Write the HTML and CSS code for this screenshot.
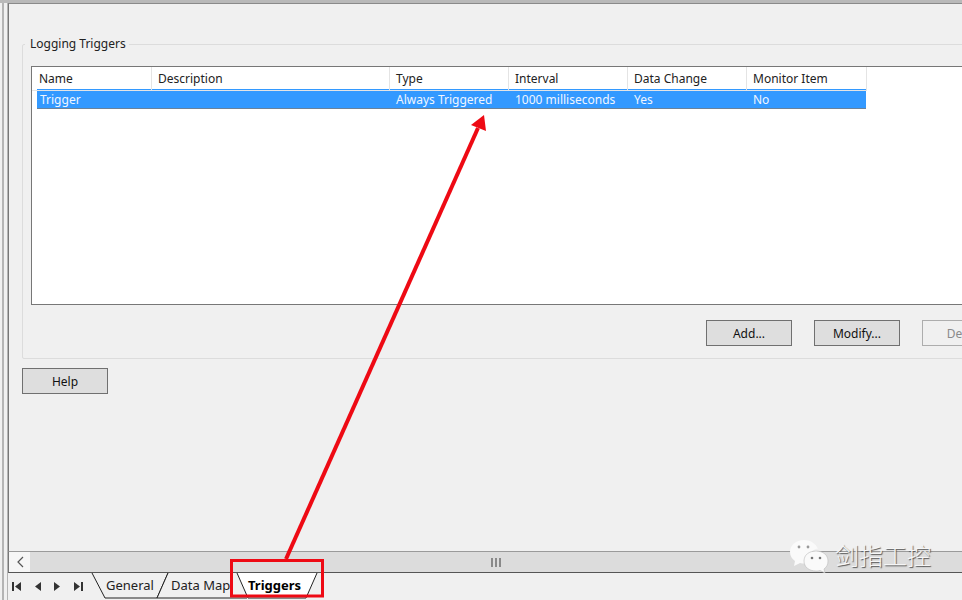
FILE: index.html
```html
<!DOCTYPE html>
<html>
<head>
    <meta charset="UTF-8">
    <title>Logging Triggers</title>
    <link rel="stylesheet" href="styles.css">
</head>
<body>
    <div class="frame">
        <div class="inner">
            <div class="content">
                <fieldset class="group">
                    <legend>Logging Triggers</legend>
                    <div class="list">
                        <div class="list-head">
                            <div class="col first">Name</div>
                            <div class="col">Description</div>
                            <div class="col">Type</div>
                            <div class="col">Interval</div>
                            <div class="col">Data Change</div>
                            <div class="col">Monitor Item</div>
                        </div>
                        <div class="list-row">
                            <div class="cell first">Trigger</div>
                            <div class="cell"></div>
                            <div class="cell">Always Triggered</div>
                            <div class="cell">1000 milliseconds</div>
                            <div class="cell">Yes</div>
                            <div class="cell">No</div>
                        </div>
                    </div>
                    <div class="actions">
                        <button class="btn">Add...</button>
                        <button class="btn">Modify...</button>
                        <button class="btn off">Delete</button>
                    </div>
                </fieldset>
                <button class="btn help">Help</button>
            </div>

            <div class="hscroll">
                <div class="arrow-btn">
                    <svg width="8" height="12" viewBox="0 0 8 12"><path d="M7 1L2 6l5 5" fill="none" stroke="#555" stroke-width="1.2"/></svg>
                </div>
                <div class="thumb">
                    <svg width="11" height="9" viewBox="0 0 11 9"><path d="M1 0v9M5 0v9M9 0v9" stroke="#666" stroke-width="1.4"/></svg>
                </div>
            </div>

            <div class="tabbar">
                <div class="nav-icons">
                    <svg width="11" height="11" viewBox="0 0 11 11"><path d="M1 1h2v9H1zM10 1v9L4 5.500z" fill="#333"/></svg>
                    <svg width="8" height="11" viewBox="0 0 8 11"><path d="M7 1v9L1 5.500z" fill="#333"/></svg>
                    <svg width="8" height="11" viewBox="0 0 8 11"><path d="M1 1v9l6-4.500z" fill="#333"/></svg>
                    <svg width="11" height="11" viewBox="0 0 11 11"><path d="M1 1v9l6-4.500zM8 1h2v9H8z" fill="#333"/></svg>
                </div>
                <div class="tabs">
                    <div class="tab general">
                        <svg width="76" height="27" viewBox="0 0 76 27"><path d="M0 0L13 25H65L76 0" fill="#f0f0f0" stroke="#222"/></svg>
                        <span>General</span>
                    </div>
                    <div class="tab datamap">
                        <svg width="90" height="27" viewBox="0 0 90 27"><path d="M11 0L0 25H90" fill="#f0f0f0" stroke="#222"/></svg>
                        <span>Data Map</span>
                    </div>
                    <div class="tab active">
                        <svg width="80" height="27" viewBox="0 0 80 27"><path d="M0 0L11 25H69L80 0" fill="#fff" stroke="#222"/></svg>
                        <span>Triggers</span>
                    </div>
                </div>
            </div>
        </div>
    </div>

    <!-- красные пометки поверх скриншота -->
    <svg class="marks" width="962" height="600" viewBox="0 0 962 600">
        <rect x="231.500" y="560.500" width="91" height="35.500" fill="none" stroke="#ee0a14" stroke-width="3"/>
        <path d="M286 559L478 128" fill="none" stroke="#ee0a14" stroke-width="4"/>
        <path d="M484 115L486 131L471 125z" fill="#ee0a14"/>
    </svg>

    <div class="stamp">
        <svg width="40" height="34" viewBox="0 0 40 34">
            <path d="M15 1C7 1 1 6 1 13c0 4 2 7 5 9l-1 5 6-3c2 .500 4 .700 6 .500C22 12 26 9 29 10 27 5 22 1 15 1z" fill="#fafafa"/>
            <path d="M27 12c-7 0-12 4-12 10s5 10 12 10c1 0 3 0 4-.500l5 2.500-1-4c3-2 4-5 4-8 0-6-5-10-12-10z" fill="#fafafa" stroke="#bbb" stroke-width=".6"/>
            <circle cx="10" cy="8" r="1.400" fill="#999"/>
            <circle cx="19" cy="8" r="1.400" fill="#999"/>
            <circle cx="23" cy="19" r="1.300" fill="#777"/>
            <circle cx="31" cy="19" r="1.300" fill="#777"/>
        </svg>
        <span>剑指工控</span>
    </div>
</body>
</html>
```

FILE: styles.css
```css
html, body {
  margin: 0;
  height: 600px;
  overflow: hidden;
}

body {
  position: relative;
  width: 962px;
  background-color: #f0f0f0;
  font-family: "Noto Sans", "Liberation Sans", sans-serif;
  font-size: 12px;
  color: #111;
  box-sizing: border-box;
  border-top: 3px solid #b9b9b9;
  padding-left: 2px;
}

/* левая двойная рамка окна */
.frame {
  height: 597px;
  border-left: 2px solid #b4b4b4;
  padding-left: 3px;
}

.inner {
  height: 100%;
  border-left: 1px solid #b4b4b4;
  display: flex;
  flex-direction: column;
}

.content {
  flex: 1;
  width: 1100px;
  box-sizing: border-box;
  border-left: 1px solid #777;
  border-top: 1px solid #8a8a8a;
  padding: 32px 0 0 13px;
  display: flex;
  flex-direction: column;
  align-items: flex-start;
}

.group {
  width: 1050px;
  height: 323px;
  box-sizing: border-box;
  margin: 0;
  padding: 0 0 0 8px;
  border: 1px solid #dcdcdc;
  border-radius: 2px;
}

.group legend {
  margin-left: -6px;
  padding: 0 3px 0 5px;
  line-height: 16px;
  color: #222;
}

.list {
  width: 1100px;
  height: 239px;
  box-sizing: border-box;
  margin-top: 14px;
  background-color: #fff;
  border: 1px solid #777;
}

.list-head {
  display: grid;
  grid-template-columns: 120px 238px 119px 119px 119px 120px;
  height: 22px;
  width: 840px;
}

.col {
  padding-left: 6px;
  line-height: 23px;
  border-right: 1px solid #e4e4e4;
  border-bottom: 1px solid #e4e4e4;
  box-sizing: border-box;
  color: #222;
}

.col.first {
  padding-left: 7px;
}

.list-row {
  display: grid;
  grid-template-columns: 116px 238px 119px 119px 119px 118px;
  width: 829px;
  height: 20px;
  box-sizing: border-box;
  margin-left: 5px;
  background-color: #3399ff;
  border-bottom: 1px solid #6b8299;
  color: #f0f6ff;
}

.cell {
  padding-left: 5px;
  line-height: 21px;
  white-space: nowrap;
}

.cell.first {
  padding-left: 3px;
}

.actions {
  display: flex;
  gap: 22px;
  margin: 15px 0 0 675px;
}

.btn {
  width: 86px;
  height: 26px;
  padding: 0;
  box-sizing: border-box;
  background-color: #dedede;
  border: 1px solid #707070;
  border-radius: 0;
  font: inherit;
  color: #111;
}

.btn.off {
  flex: none;
  background-color: #f0f0f0;
  border-color: #adadad;
  color: #8a8a8a;
}

.help {
  margin-top: 9px;
}

.hscroll {
  height: 22px;
  box-sizing: border-box;
  display: flex;
  background-color: #dcdcdc;
  border-top: 1px solid #9a9a9a;
  border-bottom: 1px solid #555;
  border-left: 1px solid #777;
}

.arrow-btn {
  width: 21px;
  background-color: #f6f6f6;
  display: flex;
  align-items: center;
  justify-content: center;
}

.thumb {
  flex: 1;
  display: flex;
  align-items: center;
  justify-content: center;
}

.tabbar {
  height: 27px;
  display: flex;
}

.nav-icons {
  width: 84px;
  display: flex;
  align-items: center;
  gap: 11.500px;
  padding: 0 0 0 3px;
  box-sizing: border-box;
}

.tabs {
  display: flex;
}

.tab {
  position: relative;
  height: 27px;
  line-height: 25px;
  font-size: 13px;
  color: #222;
}

.tab svg {
  position: absolute;
  left: 0;
  top: 0;
  overflow: visible;
}

.tab span {
  position: relative;
}

.tab.general {
  width: 76px;
  padding-left: 14px;
  box-sizing: border-box;
}

.tab.datamap {
  width: 90px;
  margin-left: -11px;
  padding-left: 14px;
  box-sizing: border-box;
}

.tab.active {
  width: 80px;
  margin-left: -10px;
  padding-left: 11px;
  box-sizing: border-box;
  font-weight: bold;
  color: #000;
}

/* пометки и водяной знак лежат поверх всего */
.marks {
  position: absolute;
  left: 0;
  top: -3px;
  pointer-events: none;
}

.stamp {
  position: absolute;
  left: 789px;
  top: 536px;
  display: flex;
  align-items: center;
  gap: 6px;
}

.stamp span {
  margin-top: -3px;
  font-family: "Noto Sans CJK SC", sans-serif;
  font-weight: 300;
  font-size: 24px;
  line-height: 30px;
  color: #f6f6f6;
  text-shadow: 1px 1px 1px #555;
}
```
